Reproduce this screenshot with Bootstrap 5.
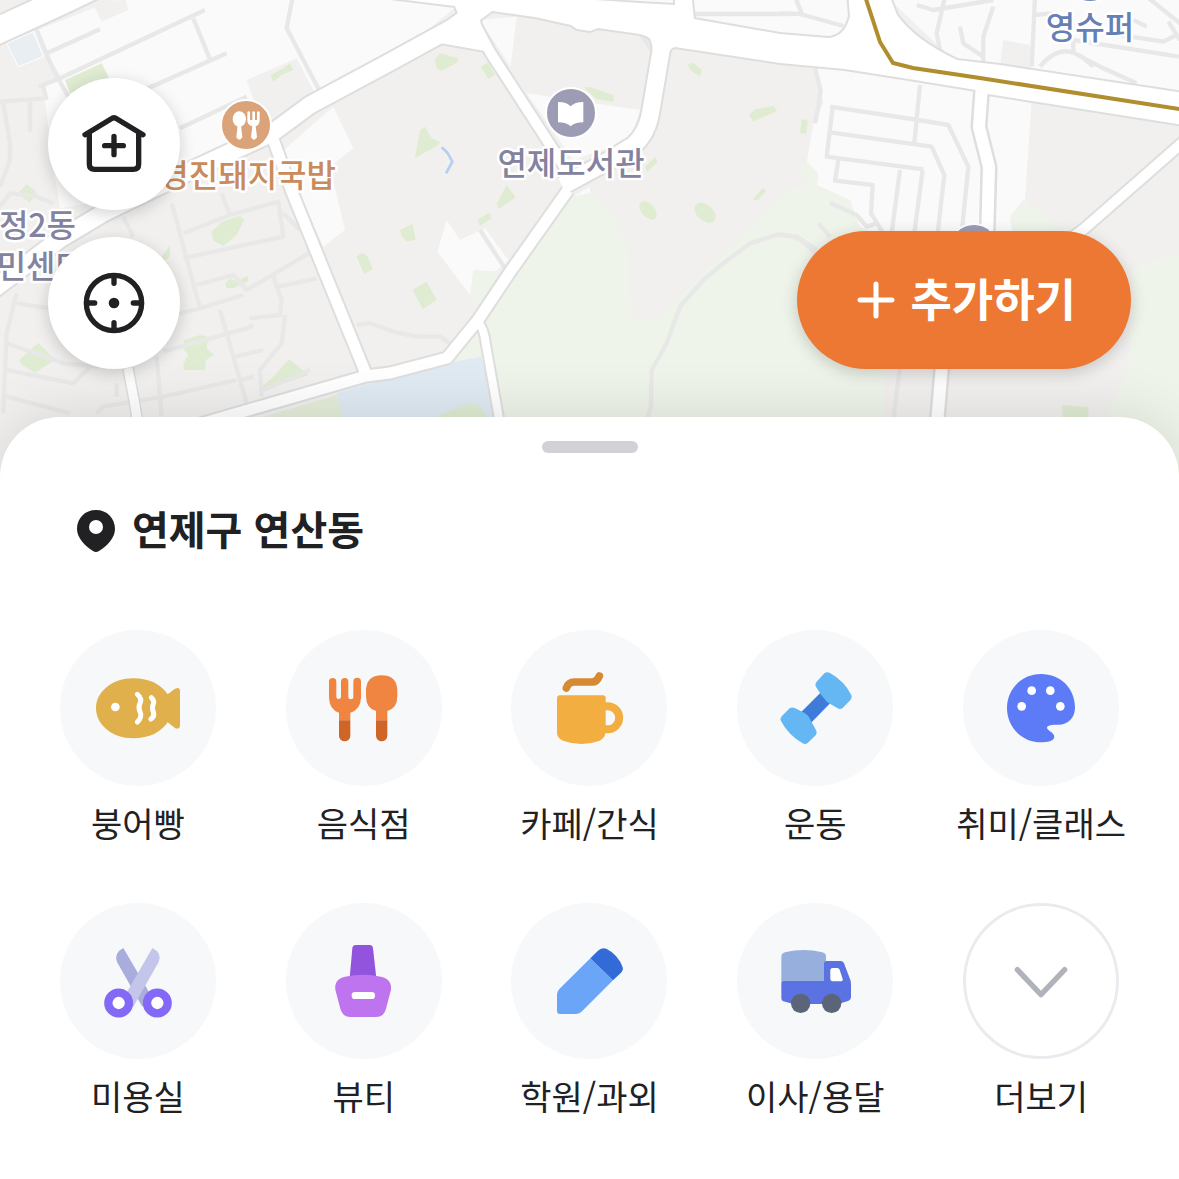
<!DOCTYPE html>
<html lang="ko">
<head>
<meta charset="utf-8">
<meta name="viewport" content="width=device-width, initial-scale=1">
<title>연제구 연산동</title>
<link href="https://cdn.jsdelivr.net/npm/bootstrap@5.3.0/dist/css/bootstrap.min.css" rel="stylesheet">
<script src="https://cdn.jsdelivr.net/npm/bootstrap@5.3.0/dist/js/bootstrap.bundle.min.js"></script>
<style>
  body { font-family: "Noto Sans CJK KR", sans-serif; color: #212124; background: #fff; }
  .map-area { height: 480px; background: #f1f0ee; }
  .map-tools { padding: 0 48px 111px; }
  .tool-stack { gap: 27px; }
  .round-btn { width: 132px; height: 132px; background: #fff; box-shadow: 0 4px 16px rgba(0,0,0,.18); }
  .round-btn svg { width: 132px; height: 132px; }
  .add-btn { height: 138px; padding: 0 55px 0 60px; gap: 15px; background: #ed7833; font-size: 45px; line-height: 60px; box-shadow: 0 4px 16px rgba(0,0,0,.18); }
  .add-btn:hover, .add-btn:active { background: #e06c28 !important; }
  .place-sheet { margin-top: -63px; border-radius: 60px 60px 0 0; padding: 24px 25px 48px; box-shadow: 0 0 60px rgba(0,0,0,.12); }
  .grab-bar { width: 96px; height: 12px; background: #d1d1d8; }
  .place-title { margin: 45px 0 68px 51px; gap: 16px; font-size: 40px; line-height: 60px; }
  .category-grid { row-gap: 56px; }
  .category { gap: 13px; color: #212124; font-size: 34px; line-height: 48px; }
  .category svg { width: 156px; height: 156px; border-radius: 50%; background: #f7f8fa; }
  .category .more-icon { background: #fff; border: 3px solid #eaebee; }
  .pin-label { font-size: 32px; font-weight: 500; paint-order: stroke; stroke: #fff; stroke-width: 5px; stroke-linejoin: round; }
  .minor { fill: none; stroke: #e8e8e8; stroke-width: 13; stroke-linejoin: round; }
  .casing { fill: none; stroke: #dedede; stroke-linejoin: round; }
  .major { fill: none; stroke: #fff; stroke-linejoin: round; }
</style>
</head>
<body>
<main>
  <section class="map-area position-relative overflow-hidden">
    <svg class="position-absolute top-0 start-0 w-100 h-100" viewBox="0 0 1179 480" preserveAspectRatio="xMidYMid slice" role="img" aria-label="지도">
      <defs>
        <path id="r-a" d="M-10 34 60 2 110-22"/>
        <path id="r-b" d="M470 15 452 28 390 62 310 105 272 133 190 171 105 212 60 239-10 292"/>
        <path id="r-c" d="M272 136 292 192 366 374"/>
        <path id="r-d" d="M200 424 290 398 366 376 390 373 447 358 478 320 510 272 568 190"/>
        <path id="r-e" d="M562 186 610 160 634 145Q648 132 651 110L662 45"/>
        <path id="r-f" d="M474 22 490 52 560 160 572 180"/>
        <path id="r-g" d="M478 322Q484 328 486 345L500 424"/>
        <path id="r-h" d="M982 84 979 127 989 167 987 240 942 365 937 424"/>
        <path id="r-i" d="M1190 136 1085 228 1040 262"/>
        <path id="r-j" d="M128 368 134 400 138 424"/>
        <path id="r-top" d="M380-8 390-2 455 6 458 14 450 24 440 43 485 51 480 20 492 11 535 17 571 25 577 29 590 31 598 28 640 34Q651 36 652 44L653 52 669 52 672 48 675 47 780 63 845 69 915 80 976 90 988 94 1190 126V94L1000 65 957 60Q915 40 897 15L888-8H848L850 16Q845 37 828 38L780 34 694 19 691-8H675V5L640 3 595 0 560-8Z"/>
      </defs>
      <g transform="scale(.33333)">
        <path fill="#fafafa" d="M100 95 290 20 380-10H1380V10L1200 160 1050 270 950 290 890 175 740 240 790 380 540 500 390 590 180 625 160 500 130 260 190 240ZM1000 320 1060 445 990 500 1035 690 970 740 840 460Z"/>
        <path fill="#f1f0ee" d="M283 20 375-5 385 30 305 65Z"/>
        <path fill="#e8eef2" stroke="#fff" stroke-width="3" d="M20 130 100 95 130 170 55 200Z"/>
        <g fill="#dfecd2">
          <path d="M195 240 305 190 330 240 210 280ZM812 225 850 205 870 190 880 210 845 225 820 245ZM58 575 80 553 110 575 90 608 70 595ZM635 695 665 665 720 648 733 660 710 705 670 738 640 722ZM1070 770 1085 758 1103 768 1118 808 1092 822ZM676 850 690 835 710 845 742 827 745 843 700 865 680 865ZM485 770 510 735 510 770 490 785ZM58 1080 115 1028 165 1080 105 1118 65 1095ZM553 1020 600 1005 625 1010 620 1045 642 1065 618 1080 615 1110 552 1110 550 1090 565 1065 550 1045ZM820 1130 868 1077 915 1115 925 1125 780 1175 780 1165Z"/>
        </g>
        <path fill="#e4edda" d="M790 1250 1010 1185 1030 1260Z"/>
        <path fill="#dfeaf3" d="M1010 1180 1345 1080 1440 1060 1495 1260H1030Z"/>
        <g class="minor">
          <path d="M110 90 160 210 205 290M140 160 300 88M115 260 190 230 615 30M580 55 630 178M420 275 680 160M540 385 740 290M878-10 860 85 960 275M130 260 140 300M0 305 130 295M90 305V395M10 310 30 430 30 480 0 560"/>
          <path d="M115 590 30 580 0 620M110 590 160 610M515 610 545 720 600 925M550 700 690 645 835 605 850 710 550 775M665 580 690 645M850 640 900 690M590 855 700 825 740 870 935 755M730 885 600 925 540 940 470 950M660 930 740 1210M750 955 840 945 845 900 830 860 820 830M835 860 950 835M855 945 845 1030 780 1110 785 1190M490 1055 740 985 760 975M705 1070 790 1050M720 1140 760 1130M790 1170 930 1110M470 1070 485 1250M50 880 20 1000 10 1240M50 910 180 930M20 1030 190 1090 300 1100M20 1110 220 1150 280 1090M350 1150V1190M20 1190 210 1240M290 1240 310 1220 490 1190 710 1140M370 650 400 710M1070 975 1110 970 1180 995 1250 1010 1320 1010 1350 1030"/>
        </g>
      </g>
      <g transform="translate(390) scale(.33333)">
        <path fill="#fafafa" d="M270 60 380 50 362 200ZM410 280 750 330 720 420 550 480ZM170 660 210 720 285 685 355 780 240 885 142 755ZM600-10H860V20ZM905-10H1400V180L910 60ZM550 590 600 560 600 580Z"/>
        <path fill="#eef4e9" d="M535 595 600 578Q690 670 710 740L725 960 800 965 870 890 1080 690 1200 570 1250 550 1380 600 1480 700V1500H340L285 960ZM250 810 330 815 270 920 240 885ZM190 1085 260 1000 275 1070Z"/>
        <g fill="#dfecd2">
          <path d="M133 180 150 160 205 175 200 188 155 213 140 205ZM272 200 295 187 315 225 295 237ZM75 475 90 390 105 380 125 415 150 425 145 435ZM320 610 350 555 377 592 325 628ZM263 658 298 638 305 655 270 677ZM30 690 68 672 77 720 50 724 35 710ZM67 870 110 845 140 900 98 927ZM580 262 600 262 672 285 670 305 620 297ZM893 192 910 188 935 210 930 230 900 210ZM765 500 795 472 803 485 772 515ZM1077 345 1095 328 1150 318 1162 332 1090 365ZM1088 598 1120 563 1128 575 1100 602Z"/>
          <ellipse cx="774" cy="631" rx="32" ry="20" transform="rotate(48 774 631)"/><ellipse cx="945" cy="638" rx="37" ry="24" transform="rotate(42 945 638)"/>
          <path d="M110 1260 230 1213Q280 1205 290 1260Z"/>
        </g>
        <path d="M155 442 172 458 187 485 168 520" fill="none" stroke="#b5d0ee" stroke-width="8"/>
        <g class="minor">
          <path d="M270 690 345 805M910 42H1200M1165 703 1080 730 1000 790 940 840 870 920 830 1030 785 1110 783 1220 770 1260M750 100 785 150"/>
          <path d="M1160 703 1210 710 1240 725 1280 765"/>
        </g>
      </g>
      <g transform="translate(780) scale(.33333)">
        <path fill="#fafafa" d="M105 200 590 265 755 310 735 605 690 650 700 720H320L240 680 210 600 110 555 80 490 100 370 130 310ZM320-10H1210V280L600 200 520 180Z"/>
        <path fill="#f1f0ee" d="M670 120 750 135 750 210 660 195ZM755 305 1210 380V760L1060 810 1040 1100 970 1260H500L520 1000 850 700 735 605Z"/>
        <path fill="#eef4e9" d="M690 650 730 600 820 670 800 710H710ZM60 500 80 485 115 520 110 560 70 530ZM1210 755 1060 800 1045 1100 960 1300 1000 1500H1210Z"/>
        <path fill="#dfecd2" d="M65 357 84 362 78 402 60 398ZM847 1215 925 1222V1260H847Z"/>
        <g class="minor">
          <path d="M105 205 122 270 115 320 105 370M150 320 415 360 505 375 565 500 545 700M158 320 140 470 430 508M420 255 403 430M155 398 455 440 493 525 473 700M175 480 165 542 278 555 273 640 310 700M360 510 335 700M428 510 403 700M150 608 230 645 260 680 290 670M115 670 150 710M0 703 50 710 110 750M360 1100 340 1260"/>
          <path d="M0 40 60 42 190 78M45-10 65 40M410 15 460 30 640 0M495-10 470 100 480 150M540 80 550 130 580 150 610 170M640 20 610 110V185M765-10 755 200M780 200Q830 140 880 158L960 200 1070 250M760 45 820 40M880 155V120L1197 170M990 100 1150 125 1190 105M1100-10 1200 70M1165 65 1200 120M1060 60 1100 80M940 200 900 165"/>
        </g>
      </g>
      <g class="casing">
        <use href="#r-a" stroke-width="30"/><use href="#r-b" stroke-width="21"/><use href="#r-c" stroke-width="15"/><use href="#r-d" stroke-width="15"/><use href="#r-e" stroke-width="21"/><use href="#r-f" stroke-width="14"/><use href="#r-g" stroke-width="12"/><use href="#r-h" stroke-width="17"/><use href="#r-i" stroke-width="14"/><use href="#r-j" stroke-width="12"/><use href="#r-top" stroke-width="4"/>
      </g>
      <g class="major">
        <use href="#r-a" stroke-width="26"/><use href="#r-b" stroke-width="17"/><use href="#r-c" stroke-width="11"/><use href="#r-d" stroke-width="11"/><use href="#r-e" stroke-width="17"/><use href="#r-f" stroke-width="10"/><use href="#r-g" stroke-width="8"/><use href="#r-h" stroke-width="12"/><use href="#r-i" stroke-width="10"/><use href="#r-j" stroke-width="9"/><use href="#r-top" fill="#fff" stroke="none"/>
      </g>
      <path d="M865-4 880 42 893 63 913 68 980 78 1185 110" fill="none" stroke="#b08d2e" stroke-width="4"/>

      <g stroke="#fff" stroke-width="2">
        <circle cx="246" cy="125" r="25" fill="#dba379"/>
        <circle cx="571" cy="113" r="25" fill="#9c9db5"/>
        <circle cx="974" cy="249" r="25" fill="#9c9db5"/>
        <circle cx="1090" cy="-23" r="25" fill="#6e89bd"/>
      </g>
      <g fill="#fff" transform="scale(.33333)">
        <ellipse cx="718" cy="357" rx="20" ry="23"/><path d="M713 375H723L727 412Q718 426 709 412ZM742 336Q746 332 750 336V360H757V336Q761 332 765 336V360H771V336Q775 332 779 336V362Q778 375 767 379L771 412Q762 426 753 412L757 379Q743 375 742 362Z"/>
        <path d="M1674 306Q1700 306 1712 319 1724 306 1750 306V367Q1724 367 1712 379 1700 367 1674 367Z"/>
      </g>
      <g class="pin-label">
        <text x="336" y="187" text-anchor="end" fill="#c98b5b">경진돼지국밥</text>
        <text x="571" y="175" text-anchor="middle" fill="#83839f">연제도서관</text>
        <text x="76" y="237" text-anchor="end" fill="#83839f">정2동</text>
        <text x="85" y="278" text-anchor="end" fill="#83839f">민센터</text>
        <text x="1090" y="39" text-anchor="middle" fill="#6480b5">영슈퍼</text>
      </g>
    </svg>

    <div class="map-tools position-absolute top-0 start-0 w-100 h-100 d-flex justify-content-between align-items-end">
      <div class="tool-stack d-flex flex-column">
        <button type="button" class="btn round-btn rounded-circle border-0 p-0" aria-label="우리집 추가">
          <svg viewBox="144 234 396 396" fill="none" stroke="#212124" stroke-width="16" stroke-linecap="round" stroke-linejoin="round"><path d="M255 404 333 357Q342 350 351 357L429 404M268 402V492Q268 508 284 508H400Q416 508 416 492V402M342 409V464M314 437H370"/></svg>
        </button>
        <button type="button" class="btn round-btn rounded-circle border-0 p-0" aria-label="현재 위치">
          <svg viewBox="144 711 396 396" fill="none" stroke="#212124" stroke-width="16" stroke-linecap="round"><circle cx="342" cy="909" r="83"/><path d="M342 828V850M342 968V990M261 909H284M400 909H423"/><circle cx="342" cy="909" r="16" fill="#212124" stroke="none"/></svg>
        </button>
      </div>
      <button type="button" class="btn add-btn rounded-pill border-0 text-white fw-bold d-flex align-items-center">
        <svg width="38" height="38" viewBox="0 0 38 38" stroke="#fff" stroke-width="5" stroke-linecap="round" aria-hidden="true"><path d="M19 3V35M3 19H35"/></svg>
        <span class="pb-1">추가하기</span>
      </button>
    </div>
  </section>

  <section class="place-sheet position-relative bg-white">
    <div class="grab-bar rounded-pill mx-auto"></div>
    <h1 class="place-title d-flex align-items-center fw-bold">
      <svg width="40" height="44" viewBox="0 -1 40 44" aria-hidden="true"><path fill="#212124" fill-rule="evenodd" d="M20 1C9 1 1 9 1 20 1 29 9 37 17 42Q20 44 23 42C31 37 39 29 39 20 39 9 31 1 20 1ZM20 11A7 7 0 1 1 20 25 7 7 0 0 1 20 11Z"/></svg>
      <span class="pb-1">연제구 연산동</span>
    </h1>
    <nav class="category-grid row row-cols-5 gx-0" aria-label="카테고리">
      <div class="col"><a href="#" class="category d-flex flex-column align-items-center text-decoration-none text-nowrap">
        <svg viewBox="30 29 468 468" aria-hidden="true"><path fill="#dfb04b" d="M250 174C299 174 334 193 353 222L374 206Q390 198 390 211V318Q388 328 376 324L353 306C333 335 299 354 250 354 187 354 138 314 138 264S187 174 250 174Z"/><circle cx="196" cy="260" r="13" fill="#fff"/><path d="M262 222Q278 235 269 251 264 264 271 277 277 290 262 305M304 232Q315 242 309 254 305 264 310 275 315 288 303 296" fill="none" stroke="#fff" stroke-width="15" stroke-linecap="round"/></svg>
        <span>붕어빵</span></a></div>
      <div class="col"><a href="#" class="category d-flex flex-column align-items-center text-decoration-none text-nowrap">
        <svg viewBox="708 29 468 468" aria-hidden="true"><path fill="#ef8540" d="M837 184A11 11 0 0 1 859 184V229A7 7 0 0 0 873 229V184A11 11 0 0 1 895 184V229A7 7 0 0 0 910 229V184A11 11 0 0 1 933 184V232Q932 267 901 277V300H867V277Q838 267 837 232ZM995 165Q1042 165 1042 213V228Q1042 264 1012 272V300H978V272Q948 264 948 228V213Q948 165 995 165Z"/><path fill="#cf6628" d="M867 300H901V346A17 17 0 0 1 867 346ZM978 300H1012V346A17 17 0 0 1 978 346Z"/></svg>
        <span>음식점</span></a></div>
      <div class="col"><a href="#" class="category d-flex flex-column align-items-center text-decoration-none text-nowrap">
        <svg viewBox="36 29 468 468" aria-hidden="true"><path d="M202 203Q208 185 226 185H279Q294 185 301 167" fill="none" stroke="#d68a33" stroke-width="23" stroke-linecap="round"/><path fill="#f2ae40" fill-rule="evenodd" d="M183 225H312Q320 225 320 233V246H326A46 46 0 0 1 326 339H319Q317 354 302 361 248 381 192 361 175 354 174 339V234Q174 225 183 225ZM320 270V315H326A22 22 0 0 0 326 270Z"/></svg>
        <span>카페/간식</span></a></div>
      <div class="col"><a href="#" class="category d-flex flex-column align-items-center text-decoration-none text-nowrap">
        <svg viewBox="711 29 468 468" aria-hidden="true"><path fill="#3f7bd9" d="M900 279 966 213 996 243 932 309Z"/><path fill="#65b7f3" d="M973 159Q981 153 990 158 1033 182 1054 224 1058 231 1052 238L1028 263Q1020 269 1013 264L982 246 964 225 947 198Q944 190 950 184ZM869 264Q876 259 884 263L914 278Q927 286 933 302L949 331Q952 339 947 345L923 368Q916 374 908 369 865 344 843 302 839 295 845 288Z"/></svg>
        <span>운동</span></a></div>
      <div class="col"><a href="#" class="category d-flex flex-column align-items-center text-decoration-none text-nowrap">
        <svg viewBox="69 29 468 468" aria-hidden="true"><path fill="#5d7bf7" d="M303 161C362 161 405 204 405 262 405 292 384 313 355 313 337 313 321 314 321 322 321 331 343 335 343 350 341 363 322 366 303 366 245 366 201 320 201 263S245 161 303 161Z"/><g fill="#fff"><circle cx="275" cy="211" r="13"/><circle cx="331" cy="211" r="13"/><circle cx="245" cy="258" r="13"/><circle cx="361" cy="258" r="13"/></g></svg>
        <span>취미/클래스</span></a></div>
      <div class="col"><a href="#" class="category d-flex flex-column align-items-center text-decoration-none text-nowrap">
        <svg viewBox="30 39 468 468" aria-hidden="true"><path fill="#a8addc" d="M220 174 304 318 277 350 201 216Q191 189 220 174Z"/><path fill="#c4c5ea" d="M307 174 222 322 250 350 326 216Q337 189 307 174Z"/><g fill="#fff" stroke="#8369f5" stroke-width="25"><circle cx="206" cy="339" r="31"/><circle cx="322" cy="339" r="31"/></g></svg>
        <span>미용실</span></a></div>
      <div class="col"><a href="#" class="category d-flex flex-column align-items-center text-decoration-none text-nowrap">
        <svg viewBox="708 39 468 468" aria-hidden="true"><path fill="#9254dc" d="M918 165H958Q968 165 969 175L979 264H899L907 175Q908 165 918 165Z"/><path fill="#bd74ee" d="M885 260Q939 248 993 260 1026 268 1023 299L1008 356Q1002 381 978 381H901Q878 381 871 356L856 299Q852 268 885 260Z"/><rect x="905" y="306" width="70" height="21" rx="10" fill="#fff"/></svg>
        <span>뷰티</span></a></div>
      <div class="col"><a href="#" class="category d-flex flex-column align-items-center text-decoration-none text-nowrap">
        <svg viewBox="36 39 468 468" aria-hidden="true"><path fill="#6ba5f7" d="M274 205 342 271 249 364Q242 372 232 372H183Q174 372 174 363V313Q174 304 181 297Z"/><path fill="#326bd7" d="M274 205 297 182Q307 171 322 176 358 194 371 232 374 241 366 248L342 271Z"/></svg>
        <span>학원/과외</span></a></div>
      <div class="col"><a href="#" class="category d-flex flex-column align-items-center text-decoration-none text-nowrap">
        <svg viewBox="711 39 468 468" aria-hidden="true"><path fill="#97afdc" d="M844 200Q844 190 855 187 911 173 967 187 978 190 978 200V280H844Z"/><path fill="#5a72e2" d="M844 282Q844 273 853 273H972V221Q972 213 980 213H1022Q1029 213 1032 220L1052 272 1053 282V322Q1053 329 1046 332L1015 342H880L850 334Q844 332 844 325Z"/><path fill="#fff" d="M998 234H1012Q1017 234 1019 239L1028 267Q1029 274 1022 274H998Q991 274 991 267V241Q991 234 998 234Z"/><g fill="#5b6478"><circle cx="902" cy="340" r="29"/><circle cx="995" cy="340" r="29"/></g></svg>
        <span>이사/용달</span></a></div>
      <div class="col"><a href="#" class="category d-flex flex-column align-items-center text-decoration-none text-nowrap">
        <svg class="more-icon" viewBox="78 48 450 450" aria-hidden="true"><path d="M232 239 303 314 374 239" fill="none" stroke="#b0b3ba" stroke-width="16" stroke-linecap="round" stroke-linejoin="round"/></svg>
        <span>더보기</span></a></div>
    </nav>
  </section>
</main>
</body>
</html>
